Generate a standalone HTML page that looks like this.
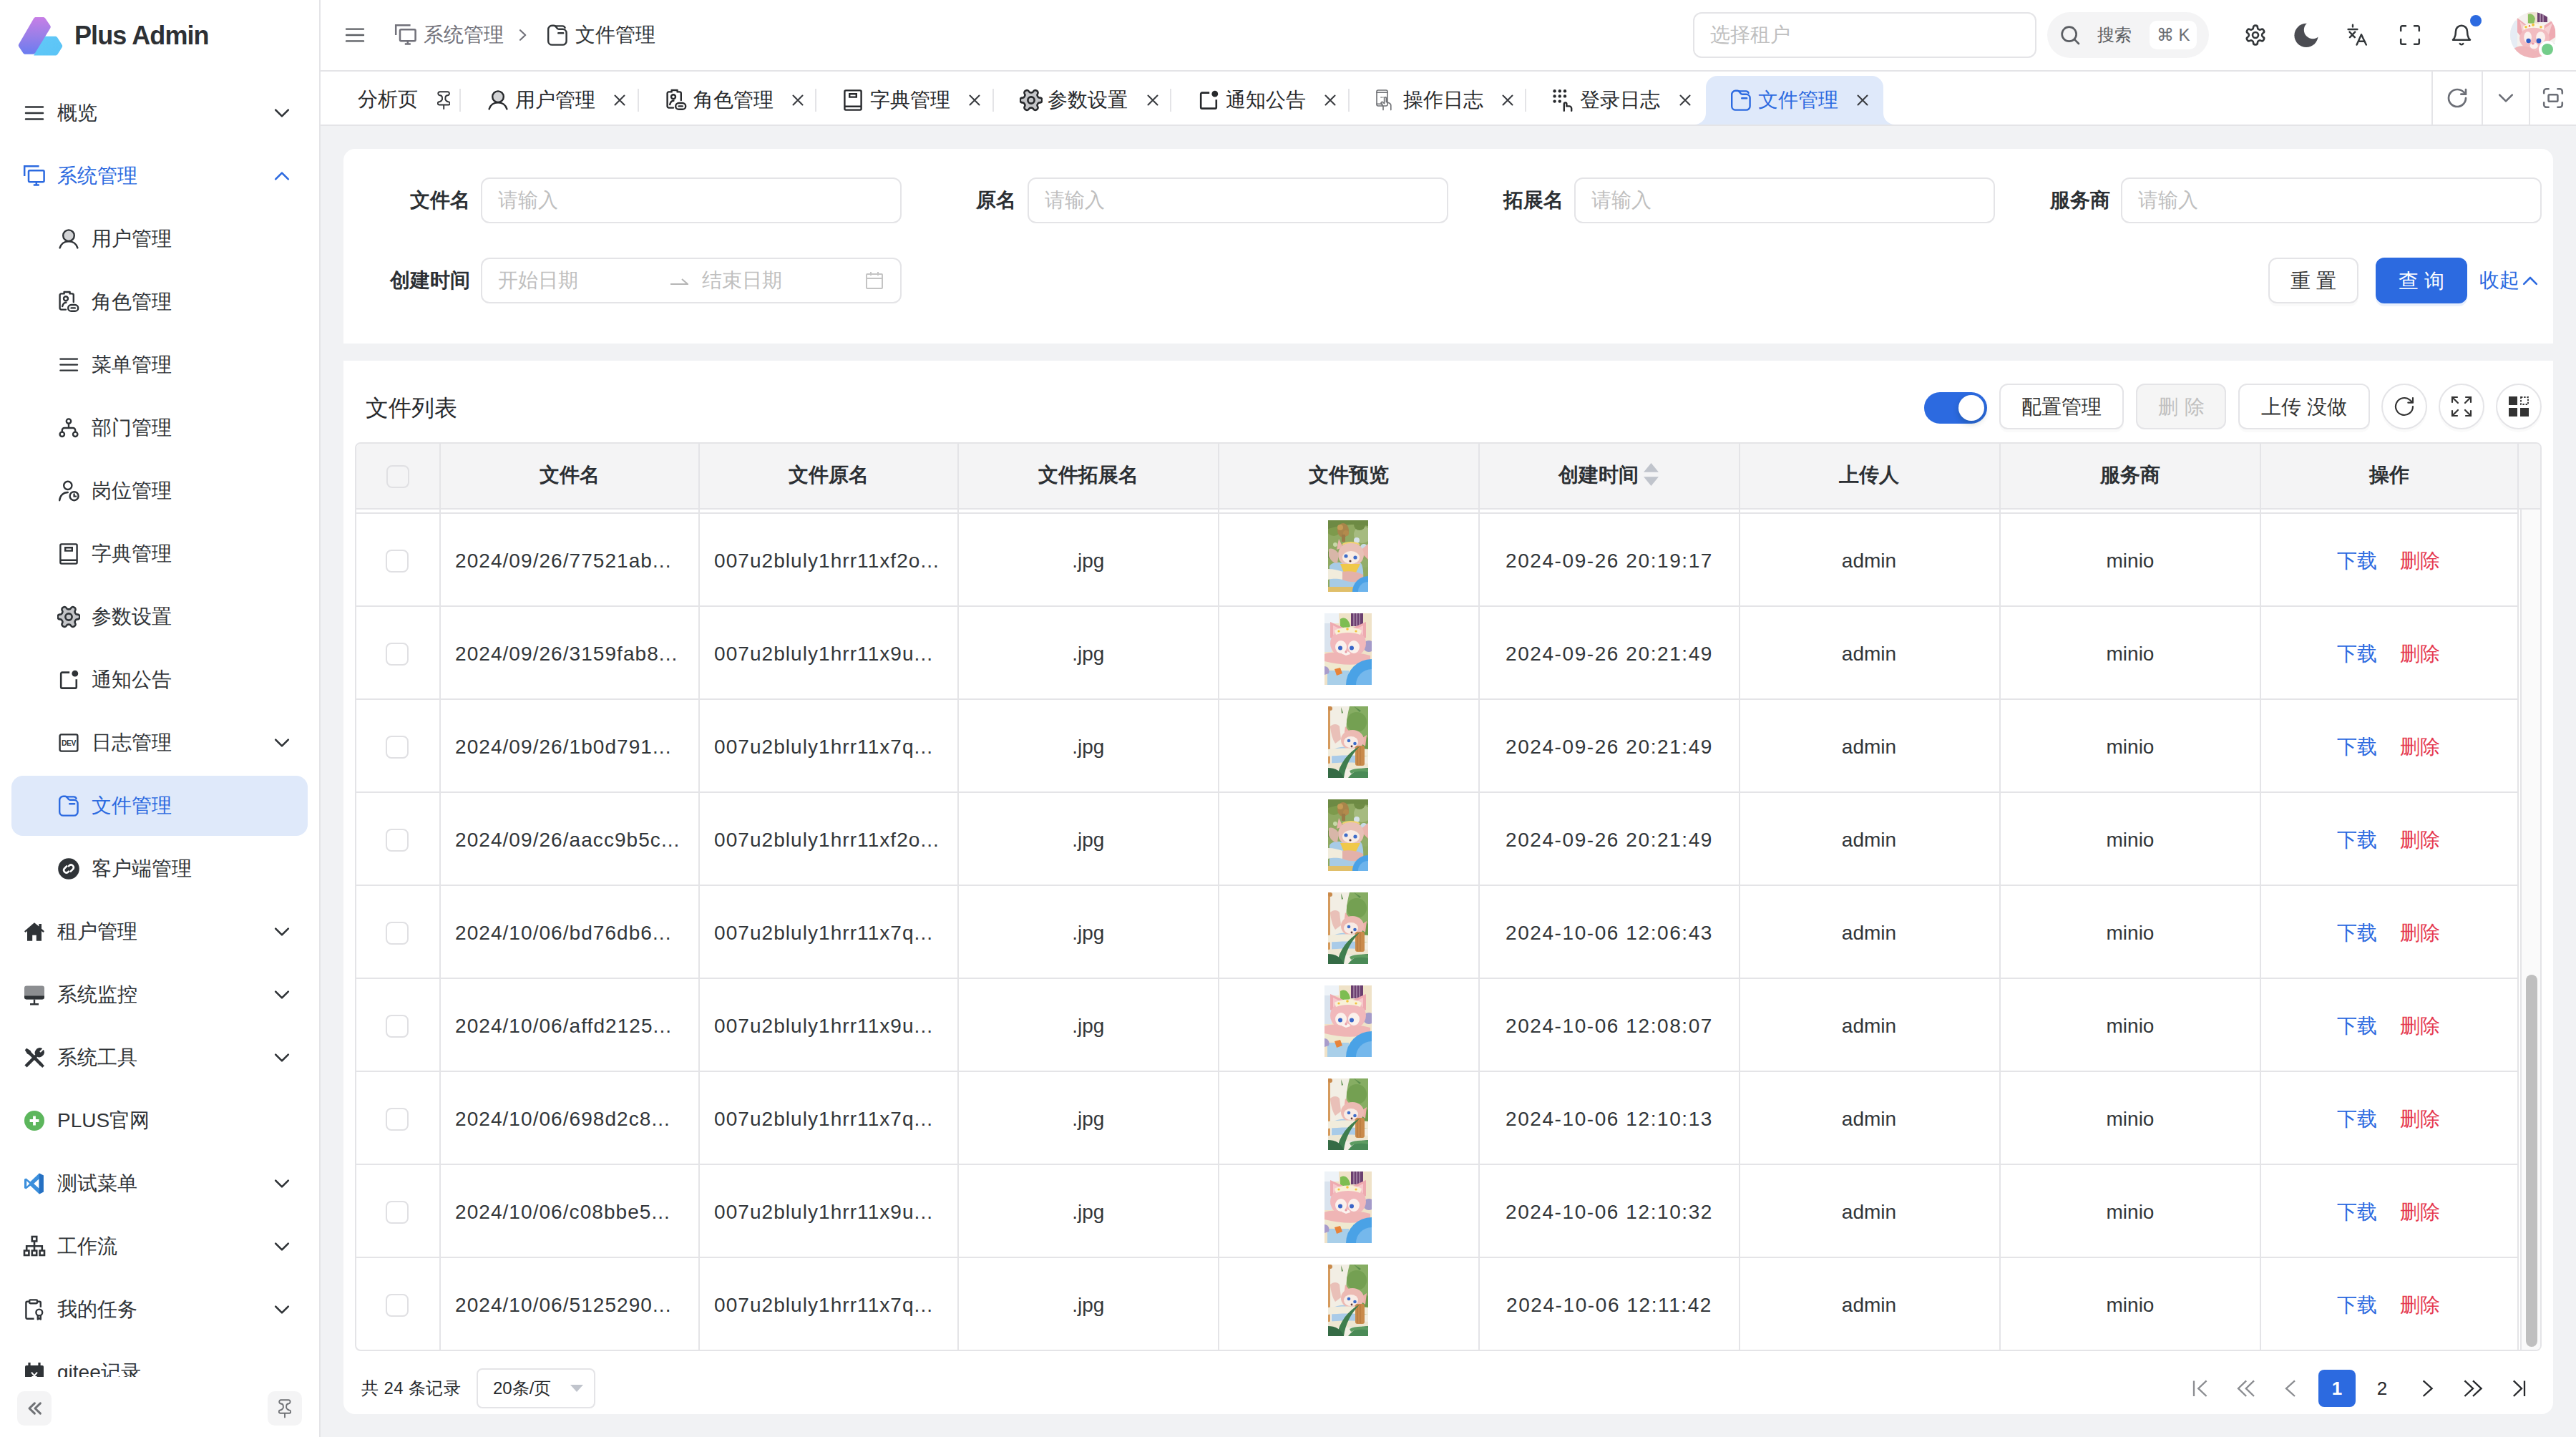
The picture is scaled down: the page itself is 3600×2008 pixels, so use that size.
<!DOCTYPE html>
<html><head><meta charset="utf-8">
<style>
*{box-sizing:border-box}
html,body{margin:0;padding:0;width:3600px;height:2008px;overflow:hidden;background:#f1f2f4}
#app{zoom:2;width:1800px;height:1004px;position:relative;overflow:hidden;background:#f1f2f4;font-family:"Liberation Sans",sans-serif;color:#323639;font-size:14px}
.abs{position:absolute}
svg{display:block}
#side{position:absolute;left:0;top:0;width:224px;height:1004px;background:#fff;border-right:1px solid #e4e4e7;color:#2f3337}
.mi{position:absolute;left:8px;width:207px;height:42px;border-radius:8px}
.mi .ic{position:absolute;top:13px;width:16px;height:16px}
.mi .tx{position:absolute;top:0;line-height:42px;font-size:14px;white-space:nowrap}
.mi .ch{position:absolute;left:181px;top:13px;width:16px;height:16px}
.mi.act{background:#dfe9fa}
#hdr{position:absolute;left:224px;top:0;width:1576px;height:50px;background:#fff;border-bottom:1px solid #e4e4e7}
#tabs{position:absolute;left:224px;top:50px;width:1576px;height:38px;background:#fff;border-bottom:1px solid #e4e4e7}
.card{position:absolute;background:#fff}
.inp{position:absolute;height:32px;border:1px solid #e4e4e7;border-radius:6px;background:#fff}
.ph{position:absolute;left:11px;top:0;line-height:30px;color:#bfbfbf;font-size:14px;white-space:nowrap}
.lbl{position:absolute;font-weight:700;font-size:14px;line-height:32px;text-align:right;white-space:nowrap;color:#2b2f33}
.btn{position:absolute;height:32px;border:1px solid #e4e4e7;border-radius:6px;background:#fff;line-height:31px;text-align:center;font-size:14px;box-shadow:0 2px 0 rgba(0,0,0,0.02)}
</style></head>
<body><div id="app">
<svg width="0" height="0" style="position:absolute">
<defs>
<symbol id="i-menu" viewBox="0 0 16 16"><path d="M2 3.7h12M2 8h12M2 12.2h12" stroke="currentColor" stroke-width="1.25" stroke-linecap="round" fill="none"/></symbol>
<symbol id="i-menu2" viewBox="0 0 16 16"><path d="M2.2 3.8h11.8M2.2 7.8h11.8M2.2 11.8h11.8" stroke="currentColor" stroke-width="1.2" stroke-linecap="round" fill="none"/></symbol>
<symbol id="i-monitor" viewBox="0 0 16 16"><g stroke="currentColor" stroke-width="1.25" fill="none"><path d="M1.1 8V1.1h10.2"/><rect x="4" y="4.1" width="10.8" height="8" rx="0.8"/><path d="M9.4 12.2v1.6M7.4 14.2h4"/></g></symbol>
<symbol id="i-chdown" viewBox="0 0 16 16"><path d="M3.6 5.8L8 10.2l4.4-4.4" stroke="currentColor" stroke-width="1.3" fill="none" stroke-linecap="round" stroke-linejoin="round"/></symbol>
<symbol id="i-chup" viewBox="0 0 16 16"><path d="M3.6 10.2L8 5.8l4.4 4.4" stroke="currentColor" stroke-width="1.3" fill="none" stroke-linecap="round" stroke-linejoin="round"/></symbol>
<symbol id="i-user" viewBox="0 0 16 16"><g stroke="currentColor" stroke-width="1.2"><circle cx="8" cy="5.6" r="3.9" fill="#d2d3d5"/><path d="M1.8 14.2c0.9-2.9 3.3-4.5 6.2-4.5s5.3 1.6 6.2 4.5" fill="none" stroke-linecap="round"/></g></symbol>
<symbol id="i-role" viewBox="0 0 16 16"><g stroke="currentColor" stroke-width="1.2" fill="none" stroke-linecap="round" stroke-linejoin="round"><path d="M6 13.3H2.8a1 1 0 0 1-1-1V3.2a1 1 0 0 1 1-1h2V1h4v1.2h1.6a1 1 0 0 1 1 1V8"/><circle cx="6" cy="5.6" r="1.5"/><path d="M3.6 11c0.4-1.6 1.2-2.6 2.6-2.6"/><rect x="7.6" y="10" width="7" height="4.4" rx="2.2"/><path d="M9.8 12.2h2.6"/></g></symbol>
<symbol id="i-tree" viewBox="0 0 16 16"><g stroke="currentColor" stroke-width="1.2" fill="none"><circle cx="8" cy="3.3" r="1.6"/><circle cx="3.4" cy="12.4" r="1.6"/><circle cx="12.6" cy="12.4" r="1.6"/><path d="M8 4.9v3M3.4 10.8V9.6a1.6 1.6 0 0 1 1.6-1.6h6a1.6 1.6 0 0 1 1.6 1.6v1.2"/></g></symbol>
<symbol id="i-post" viewBox="0 0 16 16"><g stroke="currentColor" stroke-width="1.2" fill="none" stroke-linecap="round"><circle cx="7.4" cy="4.2" r="2.8"/><path d="M1.6 14.6c0.3-3.4 2.6-5.6 5.8-5.6"/><circle cx="11.8" cy="11.6" r="3"/><path d="M11.8 10.2v1.6h1.3"/></g></symbol>
<symbol id="i-book" viewBox="0 0 16 16"><g stroke="currentColor" stroke-width="1.2" fill="none"><rect x="2.2" y="1.2" width="11.6" height="13.6" rx="0.8"/><path d="M2.2 12.4h11.6M5.6 3.6h4.8v2.2H5.6z"/></g></symbol>
<symbol id="i-gear" viewBox="1.6 1.6 20.8 20.8"><g transform="rotate(90 12 12)"><path d="M12.22 2h-.44a2 2 0 0 0-2 2v.18a2 2 0 0 1-1 1.73l-.43.25a2 2 0 0 1-2 0l-.15-.08a2 2 0 0 0-2.73.73l-.22.38a2 2 0 0 0 .73 2.730l.15.1a2 2 0 0 1 1 1.72v.51a2 2 0 0 1-1 1.74l-.15.09a2 2 0 0 0-.73 2.73l.22.38a2 2 0 0 0 2.73.73l.15-.08a2 2 0 0 1 2 0l.43.25a2 2 0 0 1 1 1.73V20a2 2 0 0 0 2 2h.44a2 2 0 0 0 2-2v-.18a2 2 0 0 1 1-1.73l.43-.25a2 2 0 0 1 2 0l.15.08a2 2 0 0 0 2.73-.73l.22-.39a2 2 0 0 0-.73-2.73l-.15-.08a2 2 0 0 1-1-1.74v-.5a2 2 0 0 1 1-1.74l.15-.09a2 2 0 0 0 .73-2.73l-.22-.38a2 2 0 0 0-2.73-.73l-.15.08a2 2 0 0 1-2 0l-.43-.25a2 2 0 0 1-1-1.73V4a2 2 0 0 0-2-2z" fill="#c5c6c9" stroke="currentColor" stroke-width="1.7" stroke-linejoin="round"/><circle cx="12" cy="12" r="3" fill="#c5c6c9" stroke="currentColor" stroke-width="1.7"/></g></symbol>
<symbol id="i-notice" viewBox="0 0 16 16"><path d="M8.6 2.8H3.4a0.8 0.8 0 0 0-0.8 0.8v9.4a0.8 0.8 0 0 0 0.8 0.8h9.2a0.8 0.8 0 0 0 0.8-0.8V7.6" stroke="currentColor" stroke-width="1.3" fill="none"/><circle cx="12.4" cy="3.6" r="2.2" fill="currentColor"/></symbol>
<symbol id="i-dev" viewBox="0 0 16 16"><rect x="1.8" y="2.2" width="12.4" height="11.6" rx="1" stroke="currentColor" stroke-width="1.2" fill="none"/><text x="8" y="10.1" font-size="5.2" font-weight="700" text-anchor="middle" fill="currentColor" font-family="Liberation Sans" letter-spacing="-0.2">DEV</text></symbol>
<symbol id="i-file" viewBox="0 0 16 16"><g stroke="currentColor" stroke-width="1.2" fill="none" stroke-linejoin="round" stroke-linecap="round"><path d="M1.6 4a2.6 2.6 0 0 1 2.6-2.6h1.4c0.6 0 1 0.3 1.3 0.7l1 1.3c0.3 0.4 0.7 0.5 1.1 0.5h2.7a2.6 2.6 0 0 1 2.6 2.6v5.7a2.6 2.6 0 0 1-2.6 2.6H4.2a2.6 2.6 0 0 1-2.6-2.6z"/><path d="M6.4 1.7h5.2c0.8 0 1.4 0.5 1.7 1.2M8.6 6.6h3.5"/></g></symbol>
<symbol id="i-client" viewBox="0 0 16 16"><circle cx="8" cy="8" r="7.4" fill="currentColor"/><path d="M6.6 6.2L4.9 7.9a1.8 1.8 0 0 0 2.5 2.5l0.6-0.6M9.4 9.8l1.7-1.7a1.8 1.8 0 0 0-2.5-2.5L8 6.2" stroke="#fff" stroke-width="1.3" fill="none" stroke-linecap="round"/></symbol>
<symbol id="i-house" viewBox="0 0 16 16"><path d="M8 1.6L1 7.6l0.8 0.9 1.2-1V14.4h3.6v-4h2.8v4H13V7.5l1.2 1 0.8-0.9-2-1.7V2.5h-1.8v1.8z" fill="currentColor"/></symbol>
<symbol id="i-monitor2" viewBox="0 0 16 16"><rect x="1" y="1.8" width="14" height="9.4" rx="1.6" fill="#8c8e91"/><path d="M1 8.8h14v0.8a1.6 1.6 0 0 1-1.6 1.6H2.6A1.6 1.6 0 0 1 1 9.6z" fill="currentColor"/><path d="M8 11.2v3.2M5 14.6h6" stroke="currentColor" stroke-width="1.2"/></symbol>
<symbol id="i-tools" viewBox="0 0 16 16"><g fill="currentColor"><path d="M1.2 13.2L8.6 5.8l1.6 1.6-7.4 7.4z"/><path d="M9 2.6a3.2 3.2 0 0 1 4.6-1l-2 2 0.8 0.8 2-2a3.2 3.2 0 0 1-1 4.6 3.2 3.2 0 0 1-3.6 0.2L8.8 6.2a3.2 3.2 0 0 1 0.2-3.6z"/><path d="M1.4 2.6l1.2-1.2 2.6 1.6 0.8 1.4 7.8 7.8-1.6 1.6-7.8-7.8-1.4-0.8z"/><path d="M11.2 12.6l1.4-1.4 2.4 2.4-1.4 1.4z"/></g></symbol>
<symbol id="i-plus" viewBox="0 0 16 16"><circle cx="8" cy="8" r="7" fill="#5cb65c"/><path d="M8 4.8v6.4M4.8 8h6.4" stroke="#fff" stroke-width="1.9"/></symbol>
<symbol id="i-vscode" viewBox="0 0 16 16"><path d="M11.4 0.8L5.2 6.6 2.2 4.3 1 4.9v6.2l1.2 0.6 3-2.3 6.2 5.8 3-1.4V2.2zM2.6 10V6l2 2zM11.2 11.2L7.6 8l3.6-3.2z" fill="#3b8fdc"/><path d="M11.4 0.8l3 1.4v11.6l-3 1.4z" fill="#2670c2"/></symbol>
<symbol id="i-org" viewBox="0 0 16 16"><g stroke="currentColor" stroke-width="1.3" fill="none"><rect x="6.4" y="1" width="3.2" height="3.2"/><rect x="1" y="10.8" width="3.2" height="3.2"/><rect x="6.4" y="10.8" width="3.2" height="3.2"/><rect x="11.8" y="10.8" width="3.2" height="3.2"/><path d="M8 4.2v6.6M2.6 10.8V7.6h10.8v3.2"/></g></symbol>
<symbol id="i-task" viewBox="0 0 16 16"><g stroke="currentColor" stroke-width="1.2" fill="none" stroke-linejoin="round"><path d="M7.8 14.4H3a0.8 0.8 0 0 1-0.8-0.8V3.2a0.8 0.8 0 0 1 0.8-0.8h1.6M10 2.4h1.6a0.8 0.8 0 0 1 0.8 0.8v3.2"/><rect x="4.6" y="1.2" width="5.4" height="2.4" rx="0.6"/><circle cx="11.4" cy="10" r="2.2"/><path d="M10.4 12v2.8l1-0.8 1 0.8V12"/></g></symbol>
<symbol id="i-cal" viewBox="0 0 16 16"><rect x="1.5" y="3" width="13" height="12" rx="1" fill="currentColor"/><path d="M4.5 1v3M11.5 1v3" stroke="currentColor" stroke-width="1.6"/><path d="M6 7.8l2 2.4 2-2.4M8 10.2v3M6.2 11h3.6" stroke="#fff" stroke-width="1" fill="none"/></symbol>
<symbol id="i-pin" viewBox="0 0 10 14"><path d="M2 0.6H7.8A1.35 1.35 0 0 1 7.9 3.3Q6.2 3.4 6.2 5V6.3Q6.5 7.2 8.3 8A1.1 1.1 0 0 1 8.6 10.2H1.4A1.1 1.1 0 0 1 1.7 8Q3.5 7.2 3.8 6.3V5Q3.8 3.4 2.1 3.3A1.35 1.35 0 0 1 2 0.6ZM5 10.2V13.1" stroke="currentColor" stroke-width="1.05" fill="none" stroke-linecap="round" stroke-linejoin="round"/></symbol>
<symbol id="i-x" viewBox="0 0 16 16"><path d="M4.75 4.75l6.5 6.5M11.25 4.75l-6.5 6.5" stroke="currentColor" stroke-width="1.05" stroke-linecap="round"/></symbol>
</defs></svg>
<svg width="0" height="0" style="position:absolute"><defs>
<symbol id="i-phone" viewBox="0 0 16 16"><g stroke="#6f7175" stroke-width="0.8" fill="none" stroke-linecap="round" stroke-linejoin="round"><rect x="1.5" y="1" width="7.5" height="11" rx="1"/><path d="M1.5 2.6h7.5M1.5 10.6h4M6 14.8v-2.4L4.6 10.4a0.8 0.8 0 0 1 1.2-1l1 1V6.6a0.7 0.7 0 0 1 1.4 0v2.6l2 0.8c0.8 0.3 1.2 1 1.2 1.8v3M4.5 6h0.2M5.8 6h0.2M7 6h0.2"/></g></symbol>
<symbol id="i-dots" viewBox="0 0 16 16"><g fill="currentColor"><circle cx="1.8" cy="1.6" r="1.1"/><circle cx="5.4" cy="1.6" r="1.1"/><circle cx="9" cy="1.6" r="1.1"/><circle cx="1.8" cy="5.2" r="1.1"/><circle cx="5.4" cy="5.2" r="1.1"/><circle cx="9" cy="5.2" r="1.1"/><circle cx="1.8" cy="8.8" r="1.1"/><circle cx="5.4" cy="8.8" r="1.1"/></g><path d="M8.4 15.4V10.6a0.9 0.9 0 0 1 1.8 0v1.6h1.8a1.6 1.6 0 0 1 1.6 1.6v1.6" stroke="currentColor" stroke-width="1.2" fill="none" stroke-linecap="round"/></symbol>
</defs></svg>
<svg width="0" height="0" style="position:absolute"><defs>
<symbol id="th-A" viewBox="0 0 56 100" preserveAspectRatio="none">
 <rect width="56" height="100" fill="#8fa962"/>
 <circle cx="8" cy="12" r="10" fill="#7d9a4c"/><circle cx="48" cy="20" r="12" fill="#a6bb80"/><circle cx="44" cy="6" r="8" fill="#6f8c45"/><circle cx="40" cy="28" r="4" fill="#d6e2ea"/><circle cx="10" cy="34" r="3" fill="#c8d8a8"/>
 <circle cx="50" cy="38" r="5" fill="#c9dbe6"/><circle cx="6" cy="48" r="7" fill="#6d8b45"/><circle cx="52" cy="60" r="6" fill="#92ad6a"/>
 <path d="M0 0h56v8C40 4 18 6 0 12z" fill="#6d8a44"/>
 <ellipse cx="21" cy="14" rx="8" ry="10" fill="#a8844a"/><circle cx="17" cy="10" r="4" fill="#c59b57"/><circle cx="25" cy="18" r="4" fill="#b38a4c"/><rect x="19" y="20" width="5" height="10" fill="#9a7a48"/>
 <path d="M15 26l6 12-9 3z" fill="#eab4ad"/><path d="M56 33v22l-12-12z" fill="#eab4ad"/>
 <path d="M2 95V64C6 58 14 58 20 60h26c4 6 4 20 2 36z" fill="#a7cbe6"/>
 <ellipse cx="32" cy="48" rx="18" ry="17" fill="#e8c0b6"/>
 <ellipse cx="32" cy="52" rx="12" ry="9" fill="#f8ece4"/>
 <circle cx="25" cy="50" r="2.6" fill="#3d6cc9"/><circle cx="38" cy="52" r="2.6" fill="#3d6cc9"/><circle cx="31" cy="57" r="1.6" fill="#5a3a3a"/>
 <path d="M20 34c6-4 18-4 24 0" stroke="#f2d271" stroke-width="2" fill="none"/>
 <path d="M1 40c5-2 12 2 14 8l-2 12c-5 0-10-4-12-10z" fill="#d8b6a8"/>
 <path d="M17 61h28l-6 12H22z" fill="#f0c84a"/>
 <path d="M0 68c8 0 14 2 21 4v11C14 82 8 81 0 83z" fill="#f1ecdc"/>
 <path d="M20 72c10-2 20 0 29 4v9c-10 2-20 2-29-2z" fill="#e3b1aa"/>
 <path d="M0 93h40v7H0z" fill="#e0bf6a"/>
 <circle cx="56" cy="100" r="22" fill="#4aa1e6"/><circle cx="56" cy="100" r="14" fill="#6db4ec"/>
</symbol>
<symbol id="th-B" viewBox="0 0 66 100" preserveAspectRatio="none">
 <rect width="66" height="100" fill="#efe2c8"/>
 <rect x="0" y="0" width="20" height="14" fill="#eef3f8"/><rect x="0" y="14" width="10" height="40" fill="#d9e3ee"/>
 <rect x="37" y="0" width="17" height="18" fill="#6b3f70"/><path d="M41 0v18M45 0v18M49 0v18" stroke="#c9b5c9" stroke-width="1"/>
 <path d="M22 8c6-4 12 0 14 10l-6 6-8-6z" fill="#7dbd52"/>
 <path d="M8 12l18 8-6 20-12-6z" fill="#eeaab0"/><path d="M58 12l-18 8 6 20 12-6z" fill="#eeaab0"/>
 <path d="M12 17l10 5-4 12-6-4z" fill="#f7c8cc"/><path d="M54 17l-10 5 4 12 6-4z" fill="#f7c8cc"/>
 <circle cx="62" cy="46" r="8" fill="#a49bc9"/>
 <ellipse cx="33" cy="42" rx="25" ry="21" fill="#f1b8bb"/>
 <path d="M14 24c10-6 28-6 38 0l-2 6c-10-4-24-4-34 0z" fill="#f8f0d8"/><circle cx="20" cy="25" r="1.6" fill="#f2c23c"/><circle cx="32" cy="22" r="1.8" fill="#f2c23c"/><circle cx="44" cy="25" r="1.6" fill="#f2c23c"/>
 <ellipse cx="23" cy="47" rx="8" ry="9" fill="#fbf1ec"/><ellipse cx="41" cy="47" rx="8" ry="9" fill="#fbf1ec"/>
 <circle cx="22" cy="48.5" r="3" fill="#3a66c8"/><circle cx="38" cy="48.5" r="3" fill="#3a66c8"/>
 <ellipse cx="30" cy="57" rx="6" ry="4" fill="#fbf3ef"/><circle cx="30" cy="54" r="1.6" fill="#e79aa4"/>
 <path d="M0 57c10-4 22-2 30 2 10-4 20-4 34 0v14H0z" fill="#efb5b5"/>
 <path d="M0 67c16 4 34 6 48 4v9c-16 2-32 2-48-4z" fill="#efe9d0"/>
 <path d="M4 80h30v20H4z" fill="#a9cfe9"/><path d="M0 74c4 0 8 4 6 10l-6 2z" fill="#a89ccb"/>
 <path d="M14 78l8-2 3 8-8 3z" fill="#e8843a"/>
 <circle cx="66" cy="100" r="36" fill="#4aa2e6"/><circle cx="66" cy="100" r="22" fill="#75b8ec"/>
</symbol>
<symbol id="th-C" viewBox="0 0 56 100" preserveAspectRatio="none">
 <rect width="56" height="100" fill="#f2eee4"/>
 <path d="M30 0h26v70H30c-4-20-8-40 0-70z" fill="#86ad63"/><circle cx="40" cy="22" r="14" fill="#74a052"/><circle cx="50" cy="52" r="10" fill="#6b9a4c"/>
 <rect x="0" y="0" width="3" height="80" fill="#d59a5c"/><circle cx="3" cy="3" r="3" fill="#c98a4b"/>
 <path d="M18 1l3 8-2 1z" fill="#5c8e4c"/><path d="M36 0l10 6-2 2z" fill="#5c8e4c"/>
 <path d="M3 28c4-4 10-4 13 0l2 18-8 6c-4-6-6-14-7-24z" fill="#e9c0b8"/>
 <path d="M24 28l8 10-10 6z" fill="#eeb0aa"/><path d="M54 40l-2 16-10-8z" fill="#eeb0aa"/>
 <path d="M5 86V62c6-6 20-6 32-4l2 30z" fill="#a9cbe8"/>
 <ellipse cx="34" cy="47" rx="16" ry="14" fill="#ecbab3"/>
 <ellipse cx="32" cy="50" rx="10" ry="8" fill="#f8ece6"/>
 <circle cx="29" cy="48" r="2.3" fill="#3d6cc9"/><circle cx="37.5" cy="52" r="2.3" fill="#3d6cc9"/><circle cx="33" cy="56" r="1.4" fill="#5a3a3a"/>
 <path d="M0 60c16-2 36-2 56 0v10c-20-2-40-2-56 0z" fill="#f1ecdc"/>
 <path d="M0 80c16-2 36-2 56 0v9c-20-2-40-2-56 0z" fill="#ede6d2"/>
 <rect x="38" y="55" width="13" height="28" rx="3" fill="#c98a4b"/><path d="M41 56v26M45 56v26" stroke="#ad7038" stroke-width="0.8"/>
 <path d="M12 100C16 80 28 64 44 56c-12 12-20 28-22 44z" fill="#3f7e4e"/>
 <path d="M0 100V86c10 0 18 4 22 14z" fill="#356b45"/>
 <path d="M28 100c8-10 16-14 28-14v14z" fill="#4a8a56"/>
 <path d="M30 90c8-4 18-4 26-2v4c-8-2-16-2-24 2z" fill="#5e9c62"/>
</symbol>
</defs></svg>

<div id="side">
 <svg class="abs" style="left:0;top:0" width="60" height="50" viewBox="0 0 60 50">
  <defs>
   <linearGradient id="lg1" x1="0" y1="0" x2="0" y2="1"><stop offset="0" stop-color="#c77ee6"/><stop offset="0.5" stop-color="#9a7fe8"/><stop offset="1" stop-color="#6a7cf0"/></linearGradient>
   <linearGradient id="lg2" x1="0" y1="0" x2="1" y2="1"><stop offset="0" stop-color="#62c8f8"/><stop offset="1" stop-color="#5ac4f6"/></linearGradient>
  </defs>
  <path d="M29.5 25.4h8.9c0.8 0 1.3 0.3 1.7 0.9l3.2 5c0.4 0.6 0.4 1.2 0 1.8l-3 4.8c-0.4 0.6-1 0.9-1.7 0.9H23.6z" fill="url(#lg2)"/>
  <path d="M25.2 12h4.8c0.8 0 1.3 0.3 1.7 0.9l3.4 5c0.4 0.6 0.4 1.2 0 1.8L24.6 36.9c-0.4 0.7-1 1-1.8 1h-5c-0.8 0-1.3-0.3-1.7-0.9l-2.9-4.4c-0.4-0.6-0.4-1.2 0-1.8L23.5 13c0.4-0.7 1-1 1.7-1z" fill="url(#lg1)"/>
 </svg>
 <div class="abs" style="left:52px;top:0;line-height:50px;font-size:18px;font-weight:700;color:#2d3034;letter-spacing:-0.45px">Plus Admin</div>
 <div class="abs" style="left:0;top:50px;width:223px;height:912px;overflow:hidden">
  <div class="abs" style="left:0;top:-50px;width:223px;height:1100px">
<div class="mi" style="top:58px"><svg class="ic" style="left:8px" viewBox="0 0 16 16"><use href="#i-menu"/></svg><span class="tx" style="left:32px">概览</span><svg class="ch" viewBox="0 0 16 16"><use href="#i-chdown"/></svg></div>
<div class="mi" style="top:102px;color:#2c6ae0"><svg class="ic" style="left:8px" viewBox="0 0 16 16"><use href="#i-monitor"/></svg><span class="tx" style="left:32px">系统管理</span><svg class="ch" viewBox="0 0 16 16"><use href="#i-chup"/></svg></div>
<div class="mi" style="top:146px"><svg class="ic" style="left:32px" viewBox="0 0 16 16"><use href="#i-user"/></svg><span class="tx" style="left:56px">用户管理</span></div>
<div class="mi" style="top:190px"><svg class="ic" style="left:32px" viewBox="0 0 16 16"><use href="#i-role"/></svg><span class="tx" style="left:56px">角色管理</span></div>
<div class="mi" style="top:234px"><svg class="ic" style="left:32px" viewBox="0 0 16 16"><use href="#i-menu2"/></svg><span class="tx" style="left:56px">菜单管理</span></div>
<div class="mi" style="top:278px"><svg class="ic" style="left:32px" viewBox="0 0 16 16"><use href="#i-tree"/></svg><span class="tx" style="left:56px">部门管理</span></div>
<div class="mi" style="top:322px"><svg class="ic" style="left:32px" viewBox="0 0 16 16"><use href="#i-post"/></svg><span class="tx" style="left:56px">岗位管理</span></div>
<div class="mi" style="top:366px"><svg class="ic" style="left:32px" viewBox="0 0 16 16"><use href="#i-book"/></svg><span class="tx" style="left:56px">字典管理</span></div>
<div class="mi" style="top:410px"><svg class="ic" style="left:32px" viewBox="0 0 16 16"><use href="#i-gear"/></svg><span class="tx" style="left:56px">参数设置</span></div>
<div class="mi" style="top:454px"><svg class="ic" style="left:32px" viewBox="0 0 16 16"><use href="#i-notice"/></svg><span class="tx" style="left:56px">通知公告</span></div>
<div class="mi" style="top:498px"><svg class="ic" style="left:32px" viewBox="0 0 16 16"><use href="#i-dev"/></svg><span class="tx" style="left:56px">日志管理</span><svg class="ch" viewBox="0 0 16 16"><use href="#i-chdown"/></svg></div>
<div class="mi act" style="top:542px;color:#2c6ae0"><svg class="ic" style="left:32px" viewBox="0 0 16 16"><use href="#i-file"/></svg><span class="tx" style="left:56px">文件管理</span></div>
<div class="mi" style="top:586px"><svg class="ic" style="left:32px" viewBox="0 0 16 16"><use href="#i-client"/></svg><span class="tx" style="left:56px">客户端管理</span></div>
<div class="mi" style="top:630px"><svg class="ic" style="left:8px" viewBox="0 0 16 16"><use href="#i-house"/></svg><span class="tx" style="left:32px">租户管理</span><svg class="ch" viewBox="0 0 16 16"><use href="#i-chdown"/></svg></div>
<div class="mi" style="top:674px"><svg class="ic" style="left:8px" viewBox="0 0 16 16"><use href="#i-monitor2"/></svg><span class="tx" style="left:32px">系统监控</span><svg class="ch" viewBox="0 0 16 16"><use href="#i-chdown"/></svg></div>
<div class="mi" style="top:718px"><svg class="ic" style="left:8px" viewBox="0 0 16 16"><use href="#i-tools"/></svg><span class="tx" style="left:32px">系统工具</span><svg class="ch" viewBox="0 0 16 16"><use href="#i-chdown"/></svg></div>
<div class="mi" style="top:762px"><svg class="ic" style="left:8px" viewBox="0 0 16 16"><use href="#i-plus"/></svg><span class="tx" style="left:32px">PLUS官网</span></div>
<div class="mi" style="top:806px"><svg class="ic" style="left:8px" viewBox="0 0 16 16"><use href="#i-vscode"/></svg><span class="tx" style="left:32px">测试菜单</span><svg class="ch" viewBox="0 0 16 16"><use href="#i-chdown"/></svg></div>
<div class="mi" style="top:850px"><svg class="ic" style="left:8px" viewBox="0 0 16 16"><use href="#i-org"/></svg><span class="tx" style="left:32px">工作流</span><svg class="ch" viewBox="0 0 16 16"><use href="#i-chdown"/></svg></div>
<div class="mi" style="top:894px"><svg class="ic" style="left:8px" viewBox="0 0 16 16"><use href="#i-task"/></svg><span class="tx" style="left:32px">我的任务</span><svg class="ch" viewBox="0 0 16 16"><use href="#i-chdown"/></svg></div>
<div class="mi" style="top:938px"><svg class="ic" style="left:8px" viewBox="0 0 16 16"><use href="#i-cal"/></svg><span class="tx" style="left:32px">gitee记录</span></div>
  </div>
 </div>
 <div class="abs" style="left:12px;top:972px;width:24px;height:24px;border-radius:5px;background:#f4f4f5"><svg width="24" height="24" viewBox="0 0 24 24"><path d="M12.2 8.4L8.5 12l3.7 3.6M16.2 8.4L12.5 12l3.7 3.6" stroke="#6f7175" stroke-width="1.5" fill="none" stroke-linecap="round" stroke-linejoin="round"/></svg></div>
 <div class="abs" style="left:187px;top:972px;width:24px;height:24px;border-radius:5px;background:#f4f4f5;color:#6f7175"><svg style="margin:5.3px 0 0 7.6px" width="9" height="13.6" viewBox="0 0 10 14" preserveAspectRatio="none"><use href="#i-pin"/></svg></div>
</div>

<div id="hdr"><svg class="abs" style="left:16px;top:16.5px;color:#5b5e63" width="16" height="16" viewBox="0 0 16 16"><path d="M2 3.8h12M2 8h12M2 12.2h12" stroke="currentColor" stroke-width="1.2" stroke-linecap="round"/></svg>
<svg class="abs" style="left:51.5px;top:16.5px;color:#71717a" width="16" height="16" viewBox="0 0 16 16"><use href="#i-monitor"/></svg>
<span class="abs" style="left:72px;top:0;line-height:49px;color:#71717a">系统管理</span>
<svg class="abs" style="left:137.5px;top:20.5px" width="8" height="8" viewBox="0 0 8 8"><path d="M2 0.6L5.6 4 2 7.4" stroke="#71717a" stroke-width="1.1" fill="none" stroke-linecap="round" stroke-linejoin="round"/></svg>
<svg class="abs" style="left:157.5px;top:16.5px;color:#323639" width="16" height="16" viewBox="0 0 16 16"><use href="#i-file"/></svg>
<span class="abs" style="left:178px;top:0;line-height:49px;color:#323639">文件管理</span>

<div class="abs" style="left:958.8px;top:8.5px;width:240px;height:32px;border:1px solid #e4e4e7;border-radius:6px"><span class="abs" style="left:11px;top:0;line-height:30px;color:#bfbfbf">选择租户</span></div>
<div class="abs" style="left:1206.6px;top:8.5px;width:113px;height:32px;border-radius:16px;background:#f4f4f5">
 <svg class="abs" style="left:8px;top:8px" width="16" height="16" viewBox="0 0 24 24"><circle cx="11" cy="11" r="7.5" stroke="#5b5e63" stroke-width="2" fill="none"/><path d="M16.6 16.6L21 21" stroke="#5b5e63" stroke-width="2" stroke-linecap="round"/></svg>
 <span class="abs" style="left:35px;top:0;line-height:32px;font-size:12px;color:#5b5e63">搜索</span>
 <div class="abs" style="left:71.5px;top:6px;width:33px;height:20px;border-radius:5px;background:#fff;font-size:12px;line-height:20px;text-align:center;color:#6b6e73">&#8984; K</div>
</div>
<svg class="abs" style="left:1344px;top:16.5px" width="16" height="16" viewBox="0 0 24 24"><path d="M12.22 2h-.44a2 2 0 0 0-2 2v.18a2 2 0 0 1-1 1.73l-.43.25a2 2 0 0 1-2 0l-.15-.08a2 2 0 0 0-2.73.73l-.22.38a2 2 0 0 0 .73 2.73l.15.1a2 2 0 0 1 1 1.72v.51a2 2 0 0 1-1 1.74l-.15.09a2 2 0 0 0-.73 2.73l.22.38a2 2 0 0 0 2.73.73l.15-.08a2 2 0 0 1 2 0l.43.25a2 2 0 0 1 1 1.73V20a2 2 0 0 0 2 2h.44a2 2 0 0 0 2-2v-.18a2 2 0 0 1 1-1.73l.43-.25a2 2 0 0 1 2 0l.15.08a2 2 0 0 0 2.73-.73l.22-.39a2 2 0 0 0-.73-2.73l-.15-.08a2 2 0 0 1-1-1.74v-.5a2 2 0 0 1 1-1.74l.15-.09a2 2 0 0 0 .73-2.73l-.22-.38a2 2 0 0 0-2.73-.73l-.15.08a2 2 0 0 1-2 0l-.43-.25a2 2 0 0 1-1-1.73V4a2 2 0 0 0-2-2z" stroke="#323639" stroke-width="2" fill="none" stroke-linejoin="round"/><circle cx="12" cy="12" r="3" stroke="#323639" stroke-width="2" fill="none"/></svg>
<svg class="abs" style="left:1378.5px;top:15.5px" width="18" height="18" viewBox="0 0 18 18"><defs><mask id="mm"><rect width="18" height="18" fill="#fff"/><circle cx="13.6" cy="5.4" r="6.2" fill="#000"/></mask></defs><circle cx="9" cy="9.2" r="8.3" fill="#4b4c52" mask="url(#mm)"/></svg>
<svg class="abs" style="left:1416px;top:16.5px" width="16" height="16" viewBox="0 0 16 16"><g stroke="#323639" stroke-width="1.2" fill="none" stroke-linecap="round" stroke-linejoin="round"><path d="M0.8 4h6.4M4 0.9v1.3M1.8 5.8l3.6 3.8M5.6 5.8l-3.6 3.8M6.8 14.8l3.2-7.2 3.4 7.2M8 12.4h4.4"/></g></svg>
<svg class="abs" style="left:1452px;top:16.5px" width="16" height="16" viewBox="0 0 16 16"><g stroke="#323639" stroke-width="1.25" fill="none" stroke-linecap="round" stroke-linejoin="round"><path d="M1.6 5V2.6a1 1 0 0 1 1-1H5M11 1.6h2.4a1 1 0 0 1 1 1V5M14.4 11v2.4a1 1 0 0 1-1 1H11M5 14.4H2.6a1 1 0 0 1-1-1V11"/></g></svg>
<svg class="abs" style="left:1488px;top:16.5px" width="16" height="16" viewBox="0 0 24 24"><g stroke="#323639" stroke-width="1.9" fill="none" stroke-linecap="round" stroke-linejoin="round"><path d="M6 8a6 6 0 0 1 12 0c0 7 3 9 3 9H3s3-2 3-9"/><path d="M10.3 21a1.94 1.94 0 0 0 3.4 0"/></g></svg>
<div class="abs" style="left:1502px;top:10.5px;width:8px;height:8px;border-radius:50%;background:#2c6ae0"></div>
<svg class="abs" style="left:1530.2px;top:8.3px" width="32" height="32" viewBox="0 0 32 32"><defs><clipPath id="avc"><circle cx="16" cy="16" r="16"/></clipPath></defs><g clip-path="url(#avc)">
<rect width="32" height="32" fill="#f4f1ee"/>
<rect x="12" y="0" width="8" height="9" fill="#efe3d3"/><path d="M12.5 1.5c2-1 4 0 5 3l-1 4-4-1z" fill="#8cc063"/><rect x="19" y="0" width="7" height="7" fill="#6b3f6e"/><path d="M21 0v7M23 0v7" stroke="#c7b4c8" stroke-width="0.6"/>
<rect x="0" y="6" width="5" height="20" fill="#e6ecf4"/>
<path d="M5 4l9 7-5 8-4-5z" fill="#eeaab2"/><path d="M6.8 6.5l5.6 4.8-3.4 5z" fill="#f6cfd2"/>
<path d="M31.5 4.5l-11 7 5 10 6-4z" fill="#eeaab2"/><path d="M29.5 7.5l-7 5 3.4 6.6z" fill="#f6cfd2"/>
<ellipse cx="17" cy="18.4" rx="10.5" ry="8.2" fill="#f2bcc0"/>
<path d="M9 10c4-3 11-3 15 0l-0.6 2.4c-4-2-10-2-14 0z" fill="#fbf6ea"/><circle cx="11" cy="10.4" r="0.9" fill="#f2c23c"/><circle cx="16" cy="8.9" r="1" fill="#f2c23c"/><circle cx="21.5" cy="10.4" r="0.9" fill="#f2c23c"/><circle cx="13.5" cy="9.6" r="0.6" fill="#e96b4b"/>
<ellipse cx="12.3" cy="17.6" rx="2.7" ry="4" fill="#fbf1ee"/><ellipse cx="21.3" cy="17.6" rx="3.2" ry="4" fill="#fbf1ee"/>
<circle cx="12.8" cy="20" r="1.6" fill="#2f5bc4"/><circle cx="20" cy="20" r="1.7" fill="#2f5bc4"/>
<ellipse cx="16.6" cy="23.4" rx="2.8" ry="2.2" fill="#fbf3f0"/><ellipse cx="15.9" cy="22" rx="1" ry="0.7" fill="#e89aa4"/>
<path d="M2 26c3-3 8-3 12-1 2 2 4 2 6 1l4 6H2z" fill="#efb4b9"/>
<circle cx="31" cy="24" r="2.2" fill="#b3a8d8"/>
</g></svg>
<div class="abs" style="left:1549.9px;top:28.4px;width:12.2px;height:12.2px;border-radius:50%;background:#74cd8a;border:2.1px solid #fff"></div>
</div>
<div id="tabs"><span class="abs" style="left:26px;top:1px;line-height:37px;color:#27292c">分析页</span>
<svg class="abs" style="left:81.4px;top:13.3px;color:#333538" width="9.2" height="13.4" viewBox="0 0 10 14" preserveAspectRatio="none"><use href="#i-pin"/></svg>
<div class="abs" style="left:97px;top:12px;width:1px;height:16px;background:#e4e4e7"></div>
<svg class="abs" style="left:116.2px;top:12px;color:#27292c" width="16" height="16" viewBox="0 0 16 16"><use href="#i-user"/></svg>
<span class="abs" style="left:136.0px;top:1px;line-height:38px;color:#27292c">用户管理</span>
<svg class="abs" style="left:201.1px;top:12px;color:#3a3c40" width="16" height="16" viewBox="0 0 16 16"><use href="#i-x"/></svg>
<div class="abs" style="left:221.4px;top:12px;width:1px;height:16px;background:#e4e4e7"></div>
<svg class="abs" style="left:240.5px;top:12px;color:#27292c" width="16" height="16" viewBox="0 0 16 16"><use href="#i-role"/></svg>
<span class="abs" style="left:260.3px;top:1px;line-height:38px;color:#27292c">角色管理</span>
<svg class="abs" style="left:325.4px;top:12px;color:#3a3c40" width="16" height="16" viewBox="0 0 16 16"><use href="#i-x"/></svg>
<div class="abs" style="left:345.7px;top:12px;width:1px;height:16px;background:#e4e4e7"></div>
<svg class="abs" style="left:364.2px;top:12px;color:#27292c" width="16" height="16" viewBox="0 0 16 16"><use href="#i-book"/></svg>
<span class="abs" style="left:384.0px;top:1px;line-height:38px;color:#27292c">字典管理</span>
<svg class="abs" style="left:449.1px;top:12px;color:#3a3c40" width="16" height="16" viewBox="0 0 16 16"><use href="#i-x"/></svg>
<div class="abs" style="left:469.4px;top:12px;width:1px;height:16px;background:#e4e4e7"></div>
<svg class="abs" style="left:488.4px;top:12px;color:#27292c" width="16" height="16" viewBox="0 0 16 16"><use href="#i-gear"/></svg>
<span class="abs" style="left:508.2px;top:1px;line-height:38px;color:#27292c">参数设置</span>
<svg class="abs" style="left:573.3px;top:12px;color:#3a3c40" width="16" height="16" viewBox="0 0 16 16"><use href="#i-x"/></svg>
<div class="abs" style="left:593.6px;top:12px;width:1px;height:16px;background:#e4e4e7"></div>
<svg class="abs" style="left:612.7px;top:12px;color:#27292c" width="16" height="16" viewBox="0 0 16 16"><use href="#i-notice"/></svg>
<span class="abs" style="left:632.5px;top:1px;line-height:38px;color:#27292c">通知公告</span>
<svg class="abs" style="left:697.6px;top:12px;color:#3a3c40" width="16" height="16" viewBox="0 0 16 16"><use href="#i-x"/></svg>
<div class="abs" style="left:717.9px;top:12px;width:1px;height:16px;background:#e4e4e7"></div>
<svg class="abs" style="left:736.5px;top:12px;color:#27292c" width="16" height="16" viewBox="0 0 16 16"><use href="#i-phone"/></svg>
<span class="abs" style="left:756.3px;top:1px;line-height:38px;color:#27292c">操作日志</span>
<svg class="abs" style="left:821.4px;top:12px;color:#3a3c40" width="16" height="16" viewBox="0 0 16 16"><use href="#i-x"/></svg>
<div class="abs" style="left:841.7px;top:12px;width:1px;height:16px;background:#e4e4e7"></div>
<svg class="abs" style="left:860.4px;top:12px;color:#27292c" width="16" height="16" viewBox="0 0 16 16"><use href="#i-dots"/></svg>
<span class="abs" style="left:880.2px;top:1px;line-height:38px;color:#27292c">登录日志</span>
<svg class="abs" style="left:945.3px;top:12px;color:#3a3c40" width="16" height="16" viewBox="0 0 16 16"><use href="#i-x"/></svg>
<svg class="abs" style="left:960px;top:3px" width="140" height="34" viewBox="0 0 140 34"><path d="M0 34a8 8 0 0 0 8-8V8a8 8 0 0 1 8-8h108a8 8 0 0 1 8 8v18a8 8 0 0 0 8 8z" fill="#dfe9fa"/></svg>
<svg class="abs" style="left:984.5px;top:12px;color:#2c6ae0" width="16" height="16" viewBox="0 0 16 16"><use href="#i-file"/></svg>
<span class="abs" style="left:1004.3px;top:1px;line-height:38px;color:#2c6ae0">文件管理</span>
<svg class="abs" style="left:1069.4px;top:12px;color:#3a3c40" width="16" height="16" viewBox="0 0 16 16"><use href="#i-x"/></svg>
<div class="abs" style="left:1475.0px;top:0;width:1px;height:37px;background:#e4e4e7"></div>
<div class="abs" style="left:1510.0px;top:0;width:1px;height:37px;background:#e4e4e7"></div>
<div class="abs" style="left:1543.0px;top:0;width:1px;height:37px;background:#e4e4e7"></div>
<svg class="abs" style="left:1485px;top:10.5px" width="16" height="16" viewBox="0 0 24 24"><g stroke="#6b6e76" stroke-width="2" fill="none" stroke-linecap="round" stroke-linejoin="round"><path d="M21 12a9 9 0 1 1-9-9c2.52 0 4.93 1 6.74 2.74L21 8"/><path d="M21 3v5h-5"/></g></svg>
<svg class="abs" style="left:1519px;top:10.5px" width="16" height="16" viewBox="0 0 16 16"><path d="M3.6 5.8L8 10.2l4.4-4.4" stroke="#6b6e76" stroke-width="1.3" fill="none" stroke-linecap="round" stroke-linejoin="round"/></svg>
<svg class="abs" style="left:1552px;top:10.5px" width="16" height="16" viewBox="0 0 16 16"><g stroke="#6b6e76" stroke-width="1.3" fill="none" stroke-linecap="round" stroke-linejoin="round"><path d="M1.6 4.6V3.4a1.8 1.8 0 0 1 1.8-1.8h1.4M11.2 1.6h1.4a1.8 1.8 0 0 1 1.8 1.8v1.4M14.4 11.2v1.4a1.8 1.8 0 0 1-1.8 1.8h-1.4M4.8 14.4H3.4a1.8 1.8 0 0 1-1.8-1.8v-1.4"/><rect x="4.8" y="5.6" width="6.4" height="4.8" rx="0.8"/></g></svg></div>
<div class="card" style="left:240px;top:104px;width:1544px;height:136px;border-radius:8px 8px 0 0"><span class="lbl" style="right:1455.5px;top:20px">文件名</span>
<div class="inp" style="left:96px;top:20px;width:294px"><span class="ph">请输入</span></div>
<span class="lbl" style="right:1074.0px;top:20px">原名</span>
<div class="inp" style="left:478px;top:20px;width:294px"><span class="ph">请输入</span></div>
<span class="lbl" style="right:691.7px;top:20px">拓展名</span>
<div class="inp" style="left:860px;top:20px;width:294px"><span class="ph">请输入</span></div>
<span class="lbl" style="right:309.7px;top:20px">服务商</span>
<div class="inp" style="left:1242px;top:20px;width:294px"><span class="ph">请输入</span></div>
<span class="lbl" style="right:1455.5px;top:76px">创建时间</span>
<div class="inp" style="left:96px;top:76px;width:294px">
 <span class="ph">开始日期</span>
 <svg class="abs" style="left:131px;top:13px" width="13" height="6" viewBox="0 0 13 6"><path d="M0.5 4.5h12L8.5 1" stroke="#b5b5b5" stroke-width="1" fill="none"/></svg>
 <span class="ph" style="left:153.5px">结束日期</span>
 <svg class="abs" style="left:267px;top:8px" width="14" height="14" viewBox="0 0 14 14"><g stroke="#c4c4c4" stroke-width="1" fill="none"><rect x="1.5" y="2.5" width="11" height="10" rx="0.5"/><path d="M1.5 5.5h11M4.5 1v2.5M9.5 1v2.5"/></g></svg>
</div>
<div class="btn" style="left:1345px;top:76px;width:63px;color:#333;letter-spacing:4.2px;text-indent:4.2px">重置</div>
<div class="btn" style="left:1420px;top:76px;width:64px;background:#2c6ae0;border-color:#2c6ae0;color:#fff;letter-spacing:4.2px;text-indent:4.2px;box-shadow:0 2px 0 rgba(44,106,224,0.1)">查询</div>
<span class="abs" style="left:1492.3px;top:76px;line-height:32px;color:#2c6ae0">收起</span>
<svg class="abs" style="left:1522px;top:87px" width="12" height="10" viewBox="0 0 12 10"><path d="M1.6 7.4L6 3l4.4 4.4" stroke="#2c6ae0" stroke-width="1.3" fill="none" stroke-linecap="round" stroke-linejoin="round"/></svg>
</div>
<div class="card" style="left:240px;top:252px;width:1544px;height:736px;border-radius:0 0 8px 8px"><span class="abs" style="left:15.300000000000011px;top:20px;line-height:26px;font-size:16px;color:#27292c">文件列表</span>
<div class="abs" style="left:1104.5px;top:22px;width:44px;height:22px;border-radius:11px;background:#2c6ae0"><div class="abs" style="left:24px;top:2px;width:18px;height:18px;border-radius:50%;background:#fff;box-shadow:0 2px 4px rgba(0,35,11,.2)"></div></div>
<div class="btn" style="left:1157px;top:16px;width:87px;color:#333">配置管理</div>
<div class="btn" style="left:1252.7px;top:16px;width:63px;background:#f5f5f5;color:#c0c0c0;letter-spacing:4.2px;text-indent:4.2px;box-shadow:none">删除</div>
<div class="btn" style="left:1324px;top:16px;width:92px;color:#333">上传 没做</div>
<div class="abs" style="left:1424px;top:16px;width:32px;height:32px;border-radius:50%;border:1px solid #e4e4e7;box-shadow:0 2px 0 rgba(0,0,0,0.02)"><div class="abs" style="left:7px;top:7px"><svg width="16" height="16" viewBox="0 0 24 24"><path d="M21 12a9 9 0 1 1-3-6.7L21 8M21 3v5h-5" stroke="#333" stroke-width="1.6" fill="none" stroke-linecap="round" stroke-linejoin="round" transform="rotate(0 12 12)"/></svg></div></div>
<div class="abs" style="left:1464px;top:16px;width:32px;height:32px;border-radius:50%;border:1px solid #e4e4e7;box-shadow:0 2px 0 rgba(0,0,0,0.02)"><div class="abs" style="left:7px;top:7px"><svg width="16" height="16" viewBox="0 0 16 16"><g stroke="#333" stroke-width="1.1" fill="none" stroke-linecap="round"><path d="M1.5 5V1.5H5M11 1.5h3.5V5M14.5 11v3.5H11M5 14.5H1.5V11M1.5 1.5l4 4M14.5 1.5l-4 4M14.5 14.5l-4-4M1.5 14.5l4-4"/></g></svg></div></div>
<div class="abs" style="left:1504px;top:16px;width:32px;height:32px;border-radius:50%;border:1px solid #e4e4e7;box-shadow:0 2px 0 rgba(0,0,0,0.02)"><div class="abs" style="left:7px;top:7px"><svg width="16" height="16" viewBox="0 0 16 16"><g fill="#333"><rect x="1" y="1" width="6" height="6"/><rect x="1" y="9" width="6" height="6"/><rect x="9" y="9" width="6" height="6"/></g><rect x="9.5" y="1.5" width="5" height="5" fill="none" stroke="#333" stroke-width="0.9" stroke-dasharray="1.2 0.9"/></svg></div></div>
<div class="abs" style="left:8px;top:57px;width:1528px;height:635px;border:1px solid #e4e4e7;border-radius:4px;overflow:hidden;background:#fff">
<div class="abs" style="left:0;top:0;width:1526px;height:45px;background:#f4f4f5;border-bottom:1px solid #e4e4e7;box-sizing:content-box"></div>
<div class="abs" style="left:1512px;top:46px;width:14px;height:600px;background:#fafafa;border-left:1px solid #e4e4e7"></div>
<div class="abs" style="left:1516px;top:371px;width:8px;height:260px;border-radius:4px;background:#bfbfbf"></div>
<div class="abs" style="left:0;top:48px;width:1511px;height:1px;background:#e4e4e7"></div>
<div class="abs" style="left:0;top:113px;width:1511px;height:1px;background:#e4e4e7"></div>
<div class="abs" style="left:0;top:178px;width:1511px;height:1px;background:#e4e4e7"></div>
<div class="abs" style="left:0;top:243px;width:1511px;height:1px;background:#e4e4e7"></div>
<div class="abs" style="left:0;top:308px;width:1511px;height:1px;background:#e4e4e7"></div>
<div class="abs" style="left:0;top:373px;width:1511px;height:1px;background:#e4e4e7"></div>
<div class="abs" style="left:0;top:438px;width:1511px;height:1px;background:#e4e4e7"></div>
<div class="abs" style="left:0;top:503px;width:1511px;height:1px;background:#e4e4e7"></div>
<div class="abs" style="left:0;top:568px;width:1511px;height:1px;background:#e4e4e7"></div>
<div class="abs" style="left:58px;top:0;width:1px;height:700px;background:#e4e4e7"></div>
<div class="abs" style="left:239px;top:0;width:1px;height:700px;background:#e4e4e7"></div>
<div class="abs" style="left:420px;top:0;width:1px;height:700px;background:#e4e4e7"></div>
<div class="abs" style="left:602px;top:0;width:1px;height:700px;background:#e4e4e7"></div>
<div class="abs" style="left:784px;top:0;width:1px;height:700px;background:#e4e4e7"></div>
<div class="abs" style="left:966px;top:0;width:1px;height:700px;background:#e4e4e7"></div>
<div class="abs" style="left:1148px;top:0;width:1px;height:700px;background:#e4e4e7"></div>
<div class="abs" style="left:1330px;top:0;width:1px;height:700px;background:#e4e4e7"></div>
<div class="abs" style="left:1510px;top:0;width:1px;height:700px;background:#e4e4e7"></div>
<div class="abs" style="left:88.8px;top:-0.5px;width:120px;text-align:center;line-height:45px;font-weight:700;color:#2b2f33">文件名</div>
<div class="abs" style="left:270.0px;top:-0.5px;width:120px;text-align:center;line-height:45px;font-weight:700;color:#2b2f33">文件原名</div>
<div class="abs" style="left:451.3px;top:-0.5px;width:120px;text-align:center;line-height:45px;font-weight:700;color:#2b2f33">文件拓展名</div>
<div class="abs" style="left:633.4px;top:-0.5px;width:120px;text-align:center;line-height:45px;font-weight:700;color:#2b2f33">文件预览</div>
<div class="abs" style="left:808.2px;top:-0.5px;width:120px;text-align:center;line-height:45px;font-weight:700;color:#2b2f33">创建时间</div>
<div class="abs" style="left:997.2px;top:-0.5px;width:120px;text-align:center;line-height:45px;font-weight:700;color:#2b2f33">上传人</div>
<div class="abs" style="left:1179.5px;top:-0.5px;width:120px;text-align:center;line-height:45px;font-weight:700;color:#2b2f33">服务商</div>
<div class="abs" style="left:1360.5px;top:-0.5px;width:120px;text-align:center;line-height:45px;font-weight:700;color:#2b2f33">操作</div>
<svg class="abs" style="left:898.8px;top:13px" width="11.5" height="17" viewBox="0 0 11 16" preserveAspectRatio="none"><path d="M5.5 0.5L10.5 6.5H0.5z" fill="#c0c4cc"/><path d="M5.5 15.5L10.5 9.5H0.5z" fill="#c0c4cc"/></svg>
<div class="abs" style="left:21px;top:15px;width:16px;height:16px;border:1px solid #e0e0e3;border-radius:4px;background:#f4f4f5"></div>
<div class="abs" style="left:20.5px;top:74.0px;width:16px;height:16px;border:1px solid #e0e0e3;border-radius:4px;background:#fff"></div>
<div class="abs" style="left:69px;top:49.5px;line-height:65px;white-space:nowrap;letter-spacing:0.53px">2024/09/26/77521ab...</div>
<div class="abs" style="left:250px;top:49.5px;line-height:65px;white-space:nowrap;letter-spacing:0.53px">007u2bluly1hrr11xf2o...</div>
<div class="abs" style="left:420.4px;top:49.5px;width:182px;text-align:center;line-height:65px">.jpg</div>
<svg class="abs" style="left:678.9px;top:53.5px;width:28px;height:50px" width="28" height="50"><use href="#th-A"/></svg>
<div class="abs" style="left:784.5px;top:49.5px;width:182px;text-align:center;line-height:65px;letter-spacing:0.79px">2024-09-26 20:19:17</div>
<div class="abs" style="left:966px;top:49.5px;width:182px;text-align:center;line-height:65px">admin</div>
<div class="abs" style="left:1148.5px;top:49.5px;width:182px;text-align:center;line-height:65px">minio</div>
<span class="abs" style="left:1384px;top:49.5px;line-height:65px;color:#2c6ae0">下载</span>
<span class="abs" style="left:1428px;top:49.5px;line-height:65px;color:#e5384f">删除</span>
<div class="abs" style="left:20.5px;top:139.0px;width:16px;height:16px;border:1px solid #e0e0e3;border-radius:4px;background:#fff"></div>
<div class="abs" style="left:69px;top:114.5px;line-height:65px;white-space:nowrap;letter-spacing:0.53px">2024/09/26/3159fab8...</div>
<div class="abs" style="left:250px;top:114.5px;line-height:65px;white-space:nowrap;letter-spacing:0.53px">007u2bluly1hrr11x9u...</div>
<div class="abs" style="left:420.4px;top:114.5px;width:182px;text-align:center;line-height:65px">.jpg</div>
<svg class="abs" style="left:676.4px;top:118.5px;width:33px;height:50px" width="33" height="50"><use href="#th-B"/></svg>
<div class="abs" style="left:784.5px;top:114.5px;width:182px;text-align:center;line-height:65px;letter-spacing:0.79px">2024-09-26 20:21:49</div>
<div class="abs" style="left:966px;top:114.5px;width:182px;text-align:center;line-height:65px">admin</div>
<div class="abs" style="left:1148.5px;top:114.5px;width:182px;text-align:center;line-height:65px">minio</div>
<span class="abs" style="left:1384px;top:114.5px;line-height:65px;color:#2c6ae0">下载</span>
<span class="abs" style="left:1428px;top:114.5px;line-height:65px;color:#e5384f">删除</span>
<div class="abs" style="left:20.5px;top:204.0px;width:16px;height:16px;border:1px solid #e0e0e3;border-radius:4px;background:#fff"></div>
<div class="abs" style="left:69px;top:179.5px;line-height:65px;white-space:nowrap;letter-spacing:0.53px">2024/09/26/1b0d791...</div>
<div class="abs" style="left:250px;top:179.5px;line-height:65px;white-space:nowrap;letter-spacing:0.53px">007u2bluly1hrr11x7q...</div>
<div class="abs" style="left:420.4px;top:179.5px;width:182px;text-align:center;line-height:65px">.jpg</div>
<svg class="abs" style="left:678.9px;top:183.5px;width:28px;height:50px" width="28" height="50"><use href="#th-C"/></svg>
<div class="abs" style="left:784.5px;top:179.5px;width:182px;text-align:center;line-height:65px;letter-spacing:0.79px">2024-09-26 20:21:49</div>
<div class="abs" style="left:966px;top:179.5px;width:182px;text-align:center;line-height:65px">admin</div>
<div class="abs" style="left:1148.5px;top:179.5px;width:182px;text-align:center;line-height:65px">minio</div>
<span class="abs" style="left:1384px;top:179.5px;line-height:65px;color:#2c6ae0">下载</span>
<span class="abs" style="left:1428px;top:179.5px;line-height:65px;color:#e5384f">删除</span>
<div class="abs" style="left:20.5px;top:269.0px;width:16px;height:16px;border:1px solid #e0e0e3;border-radius:4px;background:#fff"></div>
<div class="abs" style="left:69px;top:244.5px;line-height:65px;white-space:nowrap;letter-spacing:0.53px">2024/09/26/aacc9b5c...</div>
<div class="abs" style="left:250px;top:244.5px;line-height:65px;white-space:nowrap;letter-spacing:0.53px">007u2bluly1hrr11xf2o...</div>
<div class="abs" style="left:420.4px;top:244.5px;width:182px;text-align:center;line-height:65px">.jpg</div>
<svg class="abs" style="left:678.9px;top:248.5px;width:28px;height:50px" width="28" height="50"><use href="#th-A"/></svg>
<div class="abs" style="left:784.5px;top:244.5px;width:182px;text-align:center;line-height:65px;letter-spacing:0.79px">2024-09-26 20:21:49</div>
<div class="abs" style="left:966px;top:244.5px;width:182px;text-align:center;line-height:65px">admin</div>
<div class="abs" style="left:1148.5px;top:244.5px;width:182px;text-align:center;line-height:65px">minio</div>
<span class="abs" style="left:1384px;top:244.5px;line-height:65px;color:#2c6ae0">下载</span>
<span class="abs" style="left:1428px;top:244.5px;line-height:65px;color:#e5384f">删除</span>
<div class="abs" style="left:20.5px;top:334.0px;width:16px;height:16px;border:1px solid #e0e0e3;border-radius:4px;background:#fff"></div>
<div class="abs" style="left:69px;top:309.5px;line-height:65px;white-space:nowrap;letter-spacing:0.53px">2024/10/06/bd76db6...</div>
<div class="abs" style="left:250px;top:309.5px;line-height:65px;white-space:nowrap;letter-spacing:0.53px">007u2bluly1hrr11x7q...</div>
<div class="abs" style="left:420.4px;top:309.5px;width:182px;text-align:center;line-height:65px">.jpg</div>
<svg class="abs" style="left:678.9px;top:313.5px;width:28px;height:50px" width="28" height="50"><use href="#th-C"/></svg>
<div class="abs" style="left:784.5px;top:309.5px;width:182px;text-align:center;line-height:65px;letter-spacing:0.79px">2024-10-06 12:06:43</div>
<div class="abs" style="left:966px;top:309.5px;width:182px;text-align:center;line-height:65px">admin</div>
<div class="abs" style="left:1148.5px;top:309.5px;width:182px;text-align:center;line-height:65px">minio</div>
<span class="abs" style="left:1384px;top:309.5px;line-height:65px;color:#2c6ae0">下载</span>
<span class="abs" style="left:1428px;top:309.5px;line-height:65px;color:#e5384f">删除</span>
<div class="abs" style="left:20.5px;top:399.0px;width:16px;height:16px;border:1px solid #e0e0e3;border-radius:4px;background:#fff"></div>
<div class="abs" style="left:69px;top:374.5px;line-height:65px;white-space:nowrap;letter-spacing:0.53px">2024/10/06/affd2125...</div>
<div class="abs" style="left:250px;top:374.5px;line-height:65px;white-space:nowrap;letter-spacing:0.53px">007u2bluly1hrr11x9u...</div>
<div class="abs" style="left:420.4px;top:374.5px;width:182px;text-align:center;line-height:65px">.jpg</div>
<svg class="abs" style="left:676.4px;top:378.5px;width:33px;height:50px" width="33" height="50"><use href="#th-B"/></svg>
<div class="abs" style="left:784.5px;top:374.5px;width:182px;text-align:center;line-height:65px;letter-spacing:0.79px">2024-10-06 12:08:07</div>
<div class="abs" style="left:966px;top:374.5px;width:182px;text-align:center;line-height:65px">admin</div>
<div class="abs" style="left:1148.5px;top:374.5px;width:182px;text-align:center;line-height:65px">minio</div>
<span class="abs" style="left:1384px;top:374.5px;line-height:65px;color:#2c6ae0">下载</span>
<span class="abs" style="left:1428px;top:374.5px;line-height:65px;color:#e5384f">删除</span>
<div class="abs" style="left:20.5px;top:464.0px;width:16px;height:16px;border:1px solid #e0e0e3;border-radius:4px;background:#fff"></div>
<div class="abs" style="left:69px;top:439.5px;line-height:65px;white-space:nowrap;letter-spacing:0.53px">2024/10/06/698d2c8...</div>
<div class="abs" style="left:250px;top:439.5px;line-height:65px;white-space:nowrap;letter-spacing:0.53px">007u2bluly1hrr11x7q...</div>
<div class="abs" style="left:420.4px;top:439.5px;width:182px;text-align:center;line-height:65px">.jpg</div>
<svg class="abs" style="left:678.9px;top:443.5px;width:28px;height:50px" width="28" height="50"><use href="#th-C"/></svg>
<div class="abs" style="left:784.5px;top:439.5px;width:182px;text-align:center;line-height:65px;letter-spacing:0.79px">2024-10-06 12:10:13</div>
<div class="abs" style="left:966px;top:439.5px;width:182px;text-align:center;line-height:65px">admin</div>
<div class="abs" style="left:1148.5px;top:439.5px;width:182px;text-align:center;line-height:65px">minio</div>
<span class="abs" style="left:1384px;top:439.5px;line-height:65px;color:#2c6ae0">下载</span>
<span class="abs" style="left:1428px;top:439.5px;line-height:65px;color:#e5384f">删除</span>
<div class="abs" style="left:20.5px;top:529.0px;width:16px;height:16px;border:1px solid #e0e0e3;border-radius:4px;background:#fff"></div>
<div class="abs" style="left:69px;top:504.5px;line-height:65px;white-space:nowrap;letter-spacing:0.53px">2024/10/06/c08bbe5...</div>
<div class="abs" style="left:250px;top:504.5px;line-height:65px;white-space:nowrap;letter-spacing:0.53px">007u2bluly1hrr11x9u...</div>
<div class="abs" style="left:420.4px;top:504.5px;width:182px;text-align:center;line-height:65px">.jpg</div>
<svg class="abs" style="left:676.4px;top:508.5px;width:33px;height:50px" width="33" height="50"><use href="#th-B"/></svg>
<div class="abs" style="left:784.5px;top:504.5px;width:182px;text-align:center;line-height:65px;letter-spacing:0.79px">2024-10-06 12:10:32</div>
<div class="abs" style="left:966px;top:504.5px;width:182px;text-align:center;line-height:65px">admin</div>
<div class="abs" style="left:1148.5px;top:504.5px;width:182px;text-align:center;line-height:65px">minio</div>
<span class="abs" style="left:1384px;top:504.5px;line-height:65px;color:#2c6ae0">下载</span>
<span class="abs" style="left:1428px;top:504.5px;line-height:65px;color:#e5384f">删除</span>
<div class="abs" style="left:20.5px;top:594.0px;width:16px;height:16px;border:1px solid #e0e0e3;border-radius:4px;background:#fff"></div>
<div class="abs" style="left:69px;top:569.5px;line-height:65px;white-space:nowrap;letter-spacing:0.53px">2024/10/06/5125290...</div>
<div class="abs" style="left:250px;top:569.5px;line-height:65px;white-space:nowrap;letter-spacing:0.53px">007u2bluly1hrr11x7q...</div>
<div class="abs" style="left:420.4px;top:569.5px;width:182px;text-align:center;line-height:65px">.jpg</div>
<svg class="abs" style="left:678.9px;top:573.5px;width:28px;height:50px" width="28" height="50"><use href="#th-C"/></svg>
<div class="abs" style="left:784.5px;top:569.5px;width:182px;text-align:center;line-height:65px;letter-spacing:0.79px">2024-10-06 12:11:42</div>
<div class="abs" style="left:966px;top:569.5px;width:182px;text-align:center;line-height:65px">admin</div>
<div class="abs" style="left:1148.5px;top:569.5px;width:182px;text-align:center;line-height:65px">minio</div>
<span class="abs" style="left:1384px;top:569.5px;line-height:65px;color:#2c6ae0">下载</span>
<span class="abs" style="left:1428px;top:569.5px;line-height:65px;color:#e5384f">删除</span>
</div>
<span class="abs" style="left:12.5px;top:704px;line-height:28px;font-size:12px;color:#27292c;white-space:nowrap;letter-spacing:0.2px">共 24 条记录</span>
<div class="abs" style="left:93px;top:704px;width:83px;height:28px;border:1px solid #e4e4e7;border-radius:4px"><span class="abs" style="left:10.5px;top:0;line-height:26px;font-size:12px;color:#27292c">20条/页</span><svg class="abs" style="left:64px;top:10px" width="10" height="6" viewBox="0 0 10 6"><path d="M0.5 0.5h9L5 5.5z" fill="#c0c4cc"/></svg></div>
<svg class="abs" style="left:1289.5px;top:710px" width="16" height="16" viewBox="0 0 16 16"><path d="M3.5 2.7v10.8M12.3 2.7L6.6 8.1l5.7 5.4" stroke="#8a8c90" stroke-width="1.15" fill="none"/></svg>
<svg class="abs" style="left:1321.0px;top:710px" width="16" height="16" viewBox="0 0 16 16"><path d="M8.6 2.7L3 8.1l5.6 5.4M14 2.7L8.4 8.1l5.6 5.4" stroke="#8a8c90" stroke-width="1.15" fill="none"/></svg>
<svg class="abs" style="left:1352.5px;top:710px" width="16" height="16" viewBox="0 0 16 16"><path d="M11 2.7L5 8.1l6 5.4" stroke="#8a8c90" stroke-width="1.15" fill="none"/></svg>
<svg class="abs" style="left:1448.6px;top:710px" width="16" height="16" viewBox="0 0 16 16"><path d="M4.8 2.7l6 5.4-6 5.4" stroke="#27292c" stroke-width="1.15" fill="none"/></svg>
<svg class="abs" style="left:1480.0px;top:710px" width="16" height="16" viewBox="0 0 16 16"><path d="M2.2 2.7l5.8 5.4-5.8 5.4M8 2.7l5.8 5.4-5.8 5.4" stroke="#27292c" stroke-width="1.15" fill="none"/></svg>
<svg class="abs" style="left:1512.0px;top:710px" width="16" height="16" viewBox="0 0 16 16"><path d="M4.4 2.7l5.6 5.4-5.6 5.4M12 2.7v10.8" stroke="#27292c" stroke-width="1.15" fill="none"/></svg>
<div class="abs" style="left:1380px;top:705px;width:26px;height:26px;border-radius:4px;background:#2c6ae0;color:#fff;font-weight:700;text-align:center;line-height:26px;font-size:13px">1</div>
<div class="abs" style="left:1411.5px;top:705px;width:26px;height:26px;text-align:center;line-height:26px;font-size:13px;color:#27292c">2</div></div>
</div></body></html>
